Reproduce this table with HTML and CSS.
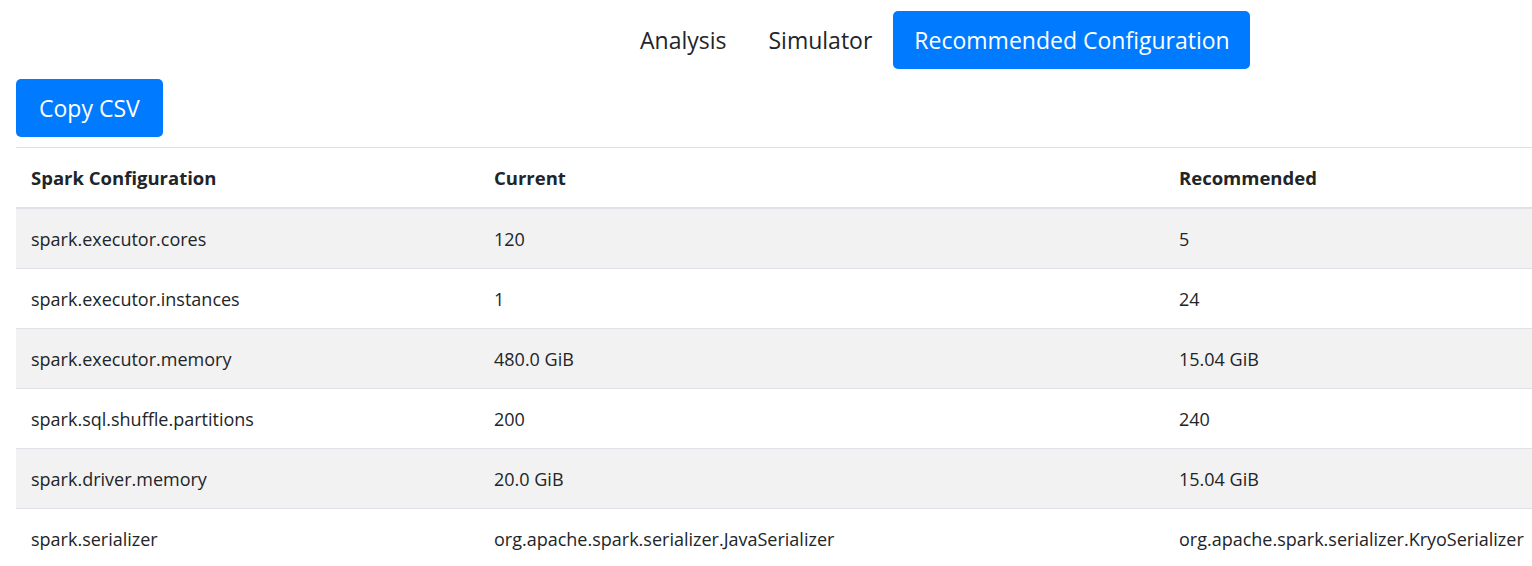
FILE: index.html
```html
<!DOCTYPE html>
<html>
<head>
<meta charset="utf-8">
<link rel="stylesheet" href="styles.css">
</head>
<body>
<div class="page">
  <nav class="tabs">
    <a class="tab">Analysis</a>
    <a class="tab">Simulator</a>
    <a class="tab active">Recommended Configuration</a>
  </nav>
  <button class="btn">Copy CSV</button>
  <table class="conf">
    <colgroup>
      <col class="c1"><col class="c2"><col class="c3">
    </colgroup>
    <thead>
      <tr><th>Spark Configuration</th><th>Current</th><th>Recommended</th></tr>
    </thead>
    <tbody>
      <tr><td>spark.executor.cores</td><td>120</td><td>5</td></tr>
      <tr><td>spark.executor.instances</td><td>1</td><td>24</td></tr>
      <tr><td>spark.executor.memory</td><td>480.0 GiB</td><td>15.04 GiB</td></tr>
      <tr><td>spark.sql.shuffle.partitions</td><td>200</td><td>240</td></tr>
      <tr><td>spark.driver.memory</td><td>20.0 GiB</td><td>15.04 GiB</td></tr>
      <tr><td>spark.serializer</td><td>org.apache.spark.serializer.JavaSerializer</td><td>org.apache.spark.serializer.KryoSerializer</td></tr>
    </tbody>
  </table>
</div>
</body>
</html>
```
FILE: styles.css
```css
html, body {
  margin: 0;
  padding: 0;
  overflow: hidden;
  background: #fff;
}
body {
  font-family: "Open Sans", "Noto Sans", sans-serif;
  color: #212529;
}
.page {
  padding: 11px 0 0 16px;
  width: 1560px;
}
.tabs {
  display: flex;
  height: 58px;
  margin-left: 603px;
}
.tab {
  display: flex;
  align-items: center;
  padding: 0 21px;
  font-size: 23px;
  color: #212529;
  border-radius: 5px;
}
.tab.sim {
  padding-right: 20px;
}
.tab.active {
  background: #007bff;
  color: #fff;
  padding: 0 20px 0 21px;
}
.btn {
  display: block;
  margin-top: 10px;
  height: 58px;
  padding: 0 23px;
  border: none;
  border-radius: 5px;
  background: #007bff;
  color: #fff;
  font-family: inherit;
  font-size: 23px;
}
.conf {
  margin-top: 10px;
  border-collapse: collapse;
  table-layout: fixed;
  width: 1540px;
  font-size: 18px;
}
.c1 { width: 463px; }
.c2 { width: 685px; }
.c3 { width: 392px; }
.conf th, .conf td {
  text-align: left;
  padding: 0 15px;
  height: 59px;
  border-top: 1px solid #dee2e6;
  white-space: nowrap;
}
.conf th {
  font-weight: 700;
  font-size: 18.5px;
  border-bottom: 2px solid #dee2e6;
}
.conf tbody tr:nth-child(odd) {
  background: #f2f2f2;
}
```
